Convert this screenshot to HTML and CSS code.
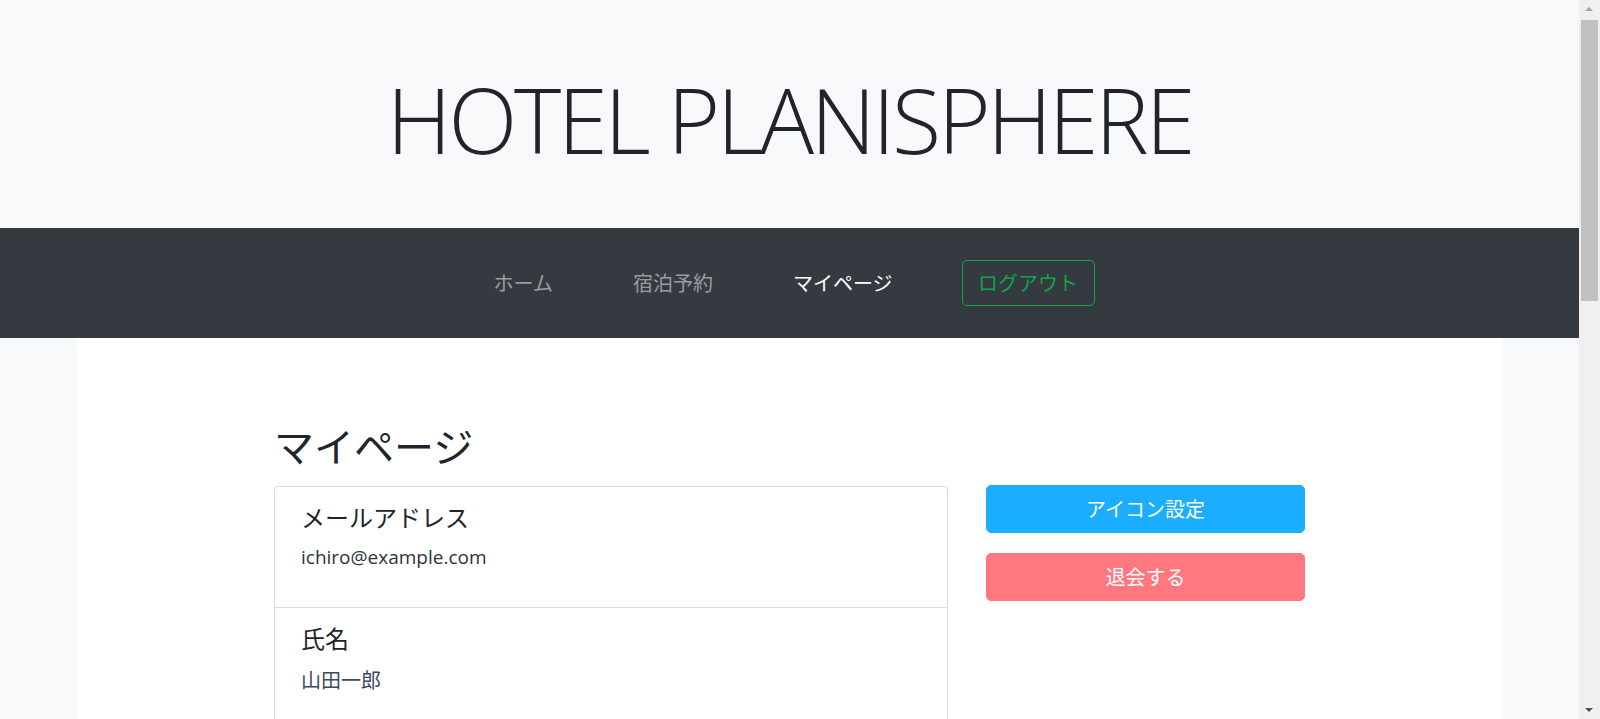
FILE: index.html
```html
<!DOCTYPE html>
<html lang="ja">
<head>
<meta charset="utf-8">
<title>マイページ | HOTEL PLANISPHERE</title>
<link rel="stylesheet" href="styles.css">
</head>
<body>
<div class="page">
  <header class="hero">
    <h1 class="brand">HOTEL PLANISPHERE</h1>
  </header>
  <nav class="navbar">
    <ul class="nav">
      <li><a class="nav-link" href="#">ホーム</a></li>
      <li><a class="nav-link" href="#">宿泊予約</a></li>
      <li><a class="nav-link active" href="#">マイページ</a></li>
      <li><button class="btn-logout" type="button">ログアウト</button></li>
    </ul>
  </nav>
  <main class="container">
    <div class="inner">
      <h2 class="page-title">マイページ</h2>
      <div class="row">
        <div class="card">
          <div class="item"><h5 class="label">メールアドレス</h5><p class="value">ichiro@example.com</p></div>
          <div class="item"><h5 class="label">氏名</h5><p class="value ja">山田一郎</p></div>
          <div class="item"><h5 class="label">会員ランク</h5><p class="value ja">プレミアム会員</p></div>
          <div class="item"><h5 class="label">住所</h5><p class="value ja">東京都豊島区池袋</p></div>
          <div class="item"><h5 class="label">電話番号</h5><p class="value">01234567891</p></div>
          <div class="item"><h5 class="label">性別</h5><p class="value ja">男性</p></div>
          <div class="item"><h5 class="label">生年月日</h5><p class="value ja">未登録</p></div>
          <div class="item"><h5 class="label">お知らせ</h5><p class="value ja">受け取る</p></div>
        </div>
        <div class="side">
          <button class="btn btn-icon" type="button">アイコン設定</button>
          <button class="btn btn-delete" type="button">退会する</button>
        </div>
      </div>
    </div>
    <footer class="footer">© HOTEL PLANISPHERE - This site is for test automation practice.</footer>
  </main>
</div>
<div class="scrollbar" aria-hidden="true">
  <span class="arrow arrow-up"></span>
  <span class="thumb"></span>
  <span class="arrow arrow-down"></span>
</div>
</body>
</html>
```
FILE: styles.css
```css
html, body {
  margin: 0;
  padding: 0;
}
body {
  background: #f8f9fa;
  color: #212529;
  font-family: "Open Sans", "Noto Sans CJK JP", sans-serif;
  font-size: 20px;
  line-height: 1.5;
}
.page {
  width: 1579px;
}
.hero {
  height: 228px;
  box-sizing: border-box;
  padding-top: 10px;
  display: flex;
  align-items: center;
  justify-content: center;
  background: #f8f9fa;
}
.brand {
  margin: 0;
  font-family: "Open Sans", sans-serif;
  font-weight: 300;
  font-size: 90px;
  line-height: 1.2;
  letter-spacing: -3.2px;
  color: #212529;
}
.navbar {
  height: 110px;
  background: #343a40;
  display: flex;
  align-items: center;
  justify-content: center;
  padding-right: 31px;
}
.nav {
  list-style: none;
  margin: 0;
  padding: 0;
  display: flex;
  align-items: center;
}
.nav-link {
  display: block;
  padding: 8px 40px;
  color: rgba(255, 255, 255, 0.5);
  text-decoration: none;
  font-family: "Noto Sans CJK JP", sans-serif;
  font-size: 20px;
  line-height: 1.5;
}
.nav-link.active {
  color: #fff;
}
.btn-logout {
  margin-left: 29px;
  font-family: "Noto Sans CJK JP", sans-serif;
  font-size: 20px;
  line-height: 30px;
  padding: 7px 15.5px;
  background: transparent;
  color: #12a445;
  border: 1px solid #12a445;
  border-radius: 5px;
}
.container {
  width: 1425px;
  margin-left: calc(50% - 712.5px);
  background: #fff;
  padding-top: 83px;
  padding-bottom: 40px;
}
.inner {
  width: 1031px;
  margin: 0 auto;
}
.page-title {
  margin: 0 0 17px;
  font-family: "Noto Sans CJK JP", sans-serif;
  font-size: 40px;
  font-weight: 400;
  line-height: 1.2;
}
.row {
  display: flex;
  align-items: flex-start;
  gap: 38px;
}
.card {
  width: 674px;
  box-sizing: border-box;
  border: 1px solid #dcdcdc;
  border-radius: 4px;
}
.item {
  padding: 15px 26px 16px;
  border-top: 1px solid #dcdcdc;
}
.item:first-child {
  border-top: 0;
}
.label {
  margin: 0 0 10px;
  font-family: "Noto Sans CJK JP", sans-serif;
  font-size: 24px;
  font-weight: 400;
  line-height: 30px;
}
.value {
  margin: 0 0 19px;
  font-size: 19px;
  line-height: 30px;
  color: #2b3440;
}
.value.ja {
  padding-top: 3px;
  margin-bottom: 16px;
  font-size: 20px;
  color: #3a4a5c;
}
.side {
  width: 319px;
  margin-top: -1px;
  display: flex;
  flex-direction: column;
  gap: 20px;
}
.btn {
  display: block;
  width: 100%;
  font-family: "Noto Sans CJK JP", sans-serif;
  font-size: 20px;
  line-height: 30px;
  padding: 8px 12px;
  border: 1px solid transparent;
  border-radius: 5px;
  color: #fff;
}
.btn-icon {
  background: #1badff;
  border-color: #1badff;
}
.btn-delete {
  background: #ff7880;
  border-color: #ff7880;
}
.footer {
  margin-top: 240px;
  padding: 20px 0;
  text-align: center;
  font-size: 16px;
  color: #6c757d;
}
.scrollbar {
  position: fixed;
  top: 0;
  right: 0;
  width: 21px;
  height: 100vh;
  background: #f0f0f0;
}
.thumb {
  position: absolute;
  left: 2px;
  right: 2px;
  top: 20px;
  height: 281px;
  background: #c1c1c1;
}
.arrow {
  position: absolute;
  left: 6px;
  width: 0;
  height: 0;
  border-left: 4.5px solid transparent;
  border-right: 4.5px solid transparent;
}
.arrow-up {
  top: 7px;
  border-bottom: 4.5px solid #a3a3a3;
}
.arrow-down {
  bottom: 7px;
  border-top: 4.5px solid #505050;
}
```
